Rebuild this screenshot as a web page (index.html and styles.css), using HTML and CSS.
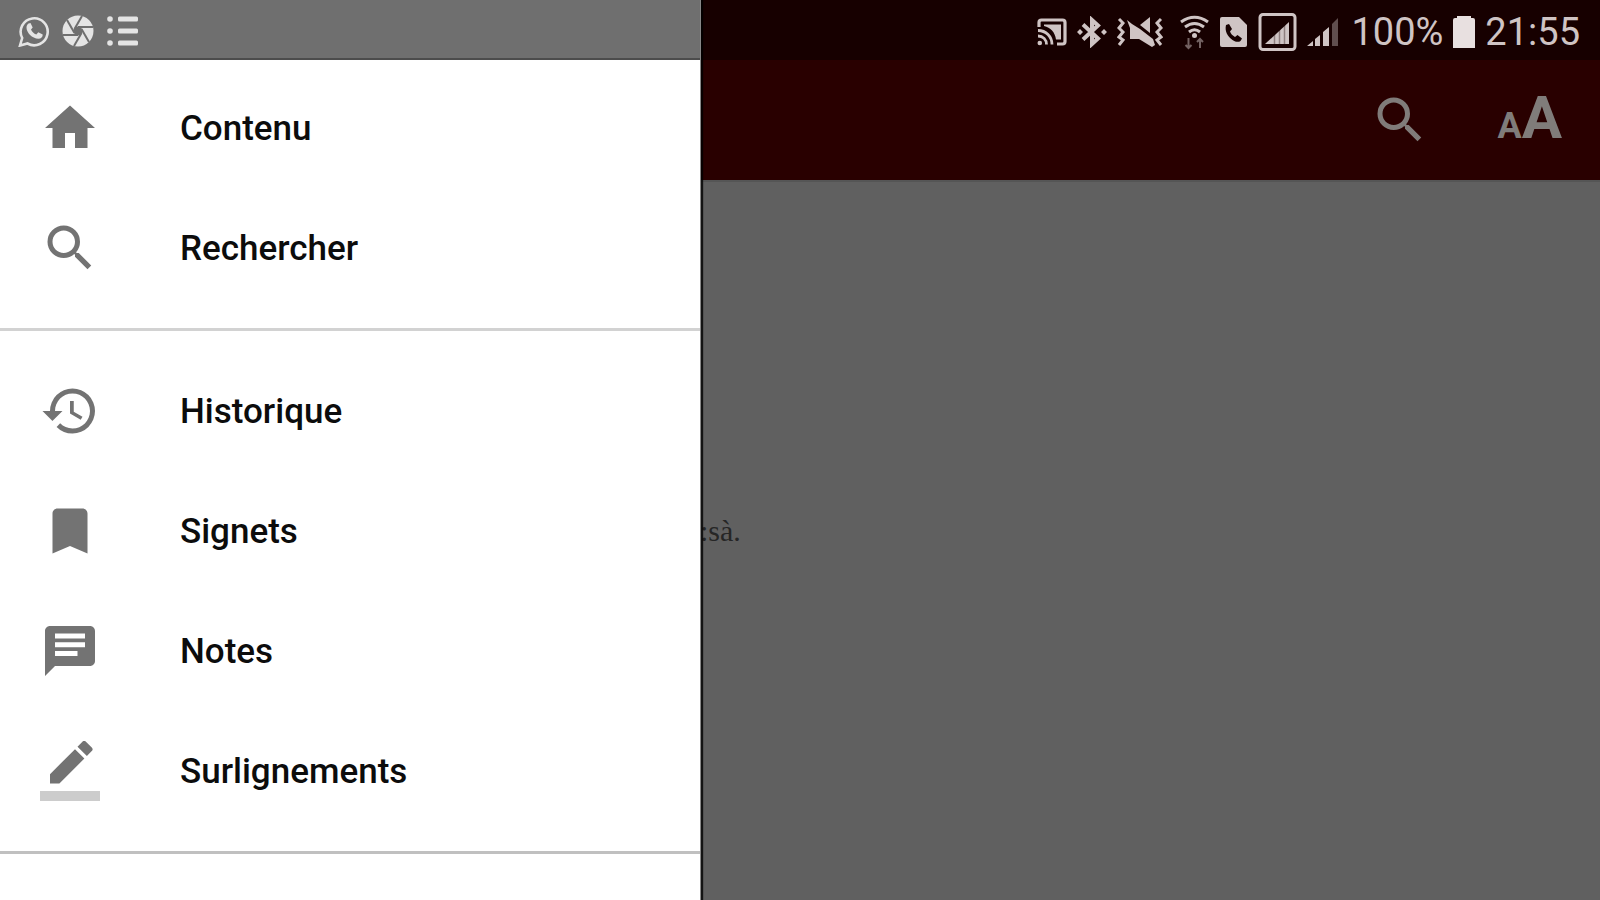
FILE: index.html
```html
<!DOCTYPE html>
<html lang="fr">
<head>
  <meta charset="UTF-8" />
  <meta name="viewport" content="width=device-width, initial-scale=1" />
  <title>Contenu</title>
  <link rel="stylesheet" href="styles.css">
</head>
<body>

<div class="screen">

  <!-- Navigation drawer -->
  <aside class="drawer">
    <div class="notifications">
      <svg viewBox="0 0 32 32" width="32" height="32">
        <path d="M2 30.500l2.200-7.500A13.500 13.500 0 1 1 9.500 28.500z" fill="none" stroke="currentColor" stroke-width="2.600"/>
        <path d="M10.500 8.500l2-.5 2.200 4.500-1.700 2c1.200 2.500 2.800 4 5.300 5l2-2.200 4.400 2.200c.2 2.500-1.700 4.300-4.200 4.300C14 23.500 8.500 17.500 8.500 12.500c0-1.700.8-3.200 2-4z" fill="currentColor"/>
      </svg>
      <svg viewBox="0 0 32 32" width="32" height="32">
        <circle cx="16" cy="16" r="15.500" fill="currentColor"/>
        <g stroke="#6f6f6f" stroke-width="2">
          <path d="M12.500 14L20 1"/>
          <path d="M12.500 14L20 1" transform="rotate(60 16 16)"/>
          <path d="M12.500 14L20 1" transform="rotate(120 16 16)"/>
          <path d="M12.500 14L20 1" transform="rotate(180 16 16)"/>
          <path d="M12.500 14L20 1" transform="rotate(240 16 16)"/>
          <path d="M12.500 14L20 1" transform="rotate(300 16 16)"/>
        </g>
        <circle cx="16" cy="16" r="4.500" fill="#6f6f6f"/>
      </svg>
      <svg viewBox="0 0 32 32" width="32" height="32" fill="currentColor">
        <circle cx="4" cy="4" r="2.800"/><rect x="12" y="1.500" width="20" height="5" rx="1.500"/>
        <circle cx="4" cy="16" r="2.800"/><rect x="12" y="13.500" width="20" height="5" rx="1.500"/>
        <circle cx="4" cy="28" r="2.800"/><rect x="12" y="25.500" width="20" height="5" rx="1.500"/>
      </svg>
    </div>

    <nav class="menu">
      <div class="menu-group menu-group-first">
        <a class="menu-item" href="#contenu">
          <svg class="icon" viewBox="0 0 24 24"><path d="M10 20v-6h4v6h5v-8h3L12 3 2 12h3v8z"/></svg>
          <span>Contenu</span>
        </a>
        <a class="menu-item" href="#rechercher">
          <svg class="icon" viewBox="0 0 24 24"><path d="M15.500 14h-.79l-.28-.27A6.471 6.471 0 0 0 16 9.500 6.500 6.500 0 1 0 9.500 16c1.610 0 3.090-.59 4.230-1.570l.27.28v.79l5 4.990L20.490 19l-4.990-5zm-6 0C7.010 14 5 11.990 5 9.500S7.010 5 9.500 5 14 7.010 14 9.500 11.990 14 9.500 14z"/></svg>
          <span>Rechercher</span>
        </a>
      </div>
      <div class="menu-group">
        <a class="menu-item" href="#historique">
          <svg class="icon" viewBox="0 0 24 24"><path d="M13 3a9 9 0 0 0-9 9H1l3.890 3.890.07.14L9 12H6c0-3.870 3.130-7 7-7s7 3.130 7 7-3.130 7-7 7c-1.930 0-3.680-.79-4.940-2.060l-1.420 1.420A8.954 8.954 0 0 0 13 21a9 9 0 0 0 0-18zm-1 5v5l4.280 2.540.72-1.210-3.500-2.080V8H12z"/></svg>
          <span>Historique</span>
        </a>
        <a class="menu-item" href="#signets">
          <svg class="icon" viewBox="0 0 24 24"><path d="M17 3H7c-1.100 0-2 .9-2 2v16l7-3 7 3V5c0-1.100-.9-2-2-2z"/></svg>
          <span>Signets</span>
        </a>
        <a class="menu-item" href="#notes">
          <svg class="icon" viewBox="0 0 24 24"><path d="M20 2H4c-1.100 0-2 .9-2 2v18l4-4h14c1.100 0 2-.9 2-2V4c0-1.100-.9-2-2-2zM6 5h12v2H6V5zm9 9H6v-2h9v2zm3-3.500H6v-2h12v2z"/></svg>
          <span>Notes</span>
        </a>
        <a class="menu-item" href="#surlignements">
          <svg class="icon" viewBox="0 0 24 24"><path d="M17.750 7L14 3.250l-10 10V17h3.750l10-10zm2.960-2.960a1 1 0 0 0 0-1.410L18.370.29a1 1 0 0 0-1.410 0L15 2.250 18.750 6l1.960-1.960z"/><path d="M0 20h24v4H0z" fill-opacity=".36"/></svg>
          <span>Surlignements</span>
        </a>
      </div>
    </nav>
  </aside>

  <!-- Page behind the drawer -->
  <main class="page">
    <div class="status-bar">
      <!-- cast -->
      <svg viewBox="0 0 30 32" width="30" height="32" fill="none" stroke="currentColor">
        <path d="M2 11V6.500Q2 4 4.500 4H25.500Q28 4 28 6.500V25.500Q28 28 25.500 28H20" stroke-width="3.200"/>
        <path d="M7 10V8.500H24V23.500H19C18 16 13.500 11.500 7 10z" fill="currentColor" stroke="none"/>
        <path d="M1 14.500c8 0 14 6 14 14M1 20c5 0 8.500 3.500 8.500 8.500" stroke-width="2.800"/>
        <circle cx="2.800" cy="27" r="2.300" fill="currentColor" stroke="none"/>
      </svg>
      <!-- bluetooth -->
      <svg viewBox="0 0 30 32" width="30" height="32" fill="none" stroke="currentColor" stroke-width="4">
        <path d="M6 8.500L21 22.500l-6 5.500V4L21 9.500 6 23.500"/>
        <path d="M0 16l3-3 3 3-3 3zM24 16l3-3 3 3-3 3z" fill="currentColor" stroke="none"/>
      </svg>
      <!-- vibrate, sound off -->
      <svg viewBox="0 0 46 32" width="46" height="32" fill="none" stroke="currentColor" stroke-width="3">
        <path d="M2 3l4 4-4 5 4 4-4 5 4 3-4 5M44 3l-4 4 4 5-4 4 4 5-4 3 4 5"/>
        <path d="M23 9L33 1v16z" fill="currentColor" stroke="none"/>
        <path d="M10 4l5 4 8 5 13 10 2 6-3 2-13-8h-9V12z" fill="currentColor" stroke="none"/>
      </svg>
      <!-- wifi -->
      <svg viewBox="0 0 36 36" width="36" height="36" fill="none" stroke="currentColor" stroke-width="3">
        <path d="M8 8q13.500-9.500 27 0M12 13q9.500-7 19 0M16 18q5.500-4.500 11 0"/>
        <circle cx="21.500" cy="21.500" r="2.500" fill="currentColor" stroke="none"/>
        <path d="M15.500 24v10M12.500 31l3 3 3-3M27 34V25M24 28l3-3 3 3" stroke-width="2" opacity=".5"/>
      </svg>
      <!-- sim call -->
      <svg viewBox="0 0 28 32" width="28" height="32">
        <path d="M3 1h17l8 8v20q0 2-2 2H3q-2 0-2-2V3q0-2 2-2z" fill="currentColor"/>
        <path d="M7 9l3-1 3 5-2 2.500c1 2.500 2.500 4 5 5.500l2.500-2 4.500 3.500-1.500 2.500c-2 1.500-5 1-8-1-5-3.500-8-9-6.500-15z" fill="#170000"/>
      </svg>
      <!-- boxed signal -->
      <svg viewBox="0 0 40 40" width="40" height="40">
        <rect x="3" y="2.500" width="35" height="35" rx="3" fill="none" stroke="currentColor" stroke-width="3"/>
        <path d="M8 32L32 10v22z" fill="currentColor"/>
        <path d="M17.500 20v12M22.500 15v17M27.500 10v22" stroke="#170000" stroke-opacity=".35" stroke-width="1.500"/>
      </svg>
      <!-- signal -->
      <svg viewBox="0 0 34 32" width="34" height="32" fill="currentColor">
        <path d="M0 30l6-5v5zM8 30v-7l5-4v11zM16 30V16l6-5v19z"/>
        <path d="M25 30V8l6-6v28z" opacity=".4"/>
      </svg>
      <span>100%</span>
      <svg class="battery" viewBox="0 0 22 32" width="22" height="32" fill="currentColor">
        <path d="M4 0h14v2h2q2 0 2 2v28H0V4q0-2 2-2h2z"/>
      </svg>
      <time>21:55</time>
    </div>

    <header class="app-bar">
      <button class="bar-button" type="button" aria-label="Rechercher">
        <svg class="icon" viewBox="0 0 24 24"><path d="M15.500 14h-.79l-.28-.27A6.471 6.471 0 0 0 16 9.500 6.500 6.500 0 1 0 9.500 16c1.610 0 3.090-.59 4.230-1.570l.27.28v.79l5 4.990L20.490 19l-4.990-5zm-6 0C7.010 14 5 11.990 5 9.500S7.010 5 9.500 5 14 7.010 14 9.500 11.990 14 9.500 14z"/></svg>
      </button>
      <button class="bar-button text-size" type="button" aria-label="Taille du texte"><span class="small-a">A</span><span class="large-a">A</span></button>
    </header>

    <article class="content">
      <p>:sà.</p>
    </article>
  </main>

</div>

</body>
</html>
```
FILE: styles.css
```css
* {
  box-sizing: border-box;
}

body {
  font-family: Roboto, sans-serif;
  margin: 0;
  background: #606060;
}

.screen {
  display: grid;
  grid-template-columns: 7fr 9fr;
  min-height: 100vh;
}

/* Drawer */
.drawer {
  display: flex;
  flex-direction: column;
  background: white;
  box-shadow: 1px 0 0 #888, 3px 0 1px rgba(0,0,0,0.8);
  z-index: 1;
}

.notifications {
  display: flex;
  align-items: center;
  gap: 12px;
  height: 60px;
  padding: 4px 18px 0;
  background: #6f6f6f;
  border-bottom: 2px solid #4c4c4c;
  color: #e4e4e4;
}

.menu-group {
  padding: 20px 0;
  border-bottom: 3px solid #c0c0c0;
}

.menu-group-first {
  padding-top: 8px;
  border-color: #d2d2d2;
}

.menu-item {
  display: flex;
  align-items: center;
  gap: 80px;
  height: 120px;
  padding: 0 40px;
  color: #0c0c0c;
  font-size: 35px;
  font-weight: 500;
  text-decoration: none;
}

.icon {
  display: block;
  width: 60px;
  height: 60px;
  fill: currentColor;
}

.menu-item .icon {
  color: #737373;
}

/* Page */
.page {
  display: flex;
  flex-direction: column;
  min-width: 0;
}

.status-bar {
  display: flex;
  align-items: center;
  justify-content: flex-end;
  gap: 10px;
  height: 60px;
  padding: 3px 20px 0;
  background: #170000;
  color: #cfc4c4;
  font-size: 38px;
}

.status-bar svg {
  flex: none;
}

.battery {
  color: #e8e0e0;
}

.app-bar {
  display: flex;
  align-items: center;
  justify-content: flex-end;
  gap: 68px;
  height: 120px;
  padding: 0 38px;
  background: #290000;
}

.bar-button {
  padding: 0;
  border: none;
  background: none;
  color: #807c7a;
  font-family: inherit;
  font-weight: bold;
  cursor: pointer;
}

.text-size {
  display: flex;
  align-items: baseline;
  padding-top: 4px;
  line-height: 60px;
}

.small-a {
  font-size: 36px;
}

.large-a {
  font-size: 60px;
}

.content {
  flex: 1;
  border-top: 2px solid #555;
  padding-top: 331px;
  background: #606060;
  color: #262626;
  font-family: "Liberation Serif", serif;
  font-size: 30px;
  line-height: 36px;
}

.content p {
  margin: 0;
}
```
